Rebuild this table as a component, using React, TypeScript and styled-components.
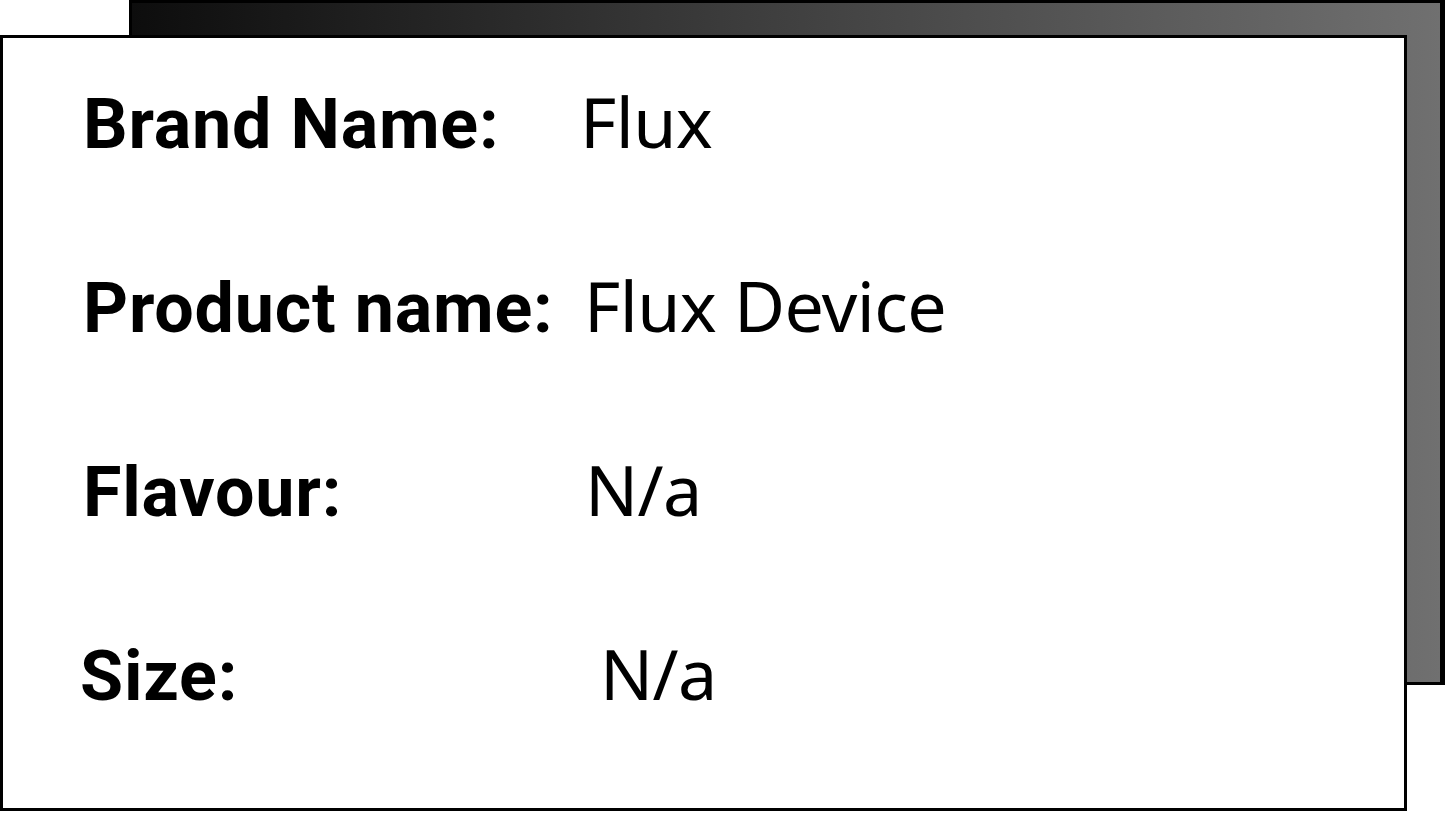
import React from "react";
import styled, { createGlobalStyle } from "styled-components";

const Global = createGlobalStyle`
  html, body { margin: 0; padding: 0; background: #ffffff; }
  body { font-family: "Noto Sans", "Open Sans", sans-serif; }
`;

const Stage = styled.div`
  display: grid;
  width: 1445px;
  height: 813px;
  overflow: hidden;
`;

const BackPanel = styled.div`
  grid-area: 1 / 1;
  margin-left: 129px;
  width: 1316px;
  height: 685px;
  box-sizing: border-box;
  border: 3px solid #000;
  border-right-width: 5px;
  background: linear-gradient(90deg, #0d0d0d 0%, #3b3b3b 45%, #707070 100%);
`;

const Card = styled.div`
  grid-area: 1 / 1;
  position: relative;
  z-index: 1;
  margin-top: 35px;
  width: 1407px;
  height: 776px;
  box-sizing: border-box;
  border: 3px solid #000;
  background: #fff;
  padding: 48px 0 0 80px;
  display: flex;
  flex-direction: column;
  gap: 114px;
`;

const Row = styled.div`
  display: grid;
  grid-template-columns: 499px 1fr;
  align-items: baseline;
  height: 70px;
  line-height: 1;
  font-size: 70px;
  color: #000;
`;

const Label = styled.span<{ $shift?: number }>`
  font-family: Roboto, "Noto Sans", sans-serif;
  font-weight: 700;
  letter-spacing: 0.8px;
  white-space: nowrap;
  margin-left: ${(p) => p.$shift ?? 0}px;
`;

const Value = styled.span<{ $shift?: number }>`
  font-weight: 400;
  letter-spacing: -0.6px;
  white-space: nowrap;
  margin-left: ${(p) => p.$shift ?? 0}px;
`;

const rows = [
  { label: "Brand Name:", value: "Flux", shift: -2, lshift: 0 },
  { label: "Product name:", value: "Flux Device", shift: 2, lshift: 0 },
  { label: "Flavour:", value: "N/a", shift: 3, lshift: 0 },
  { label: "Size:", value: "N/a", shift: 18, lshift: -3 },
];

export default function App() {
  return (
    <>
      <Global />
      <Stage>
        <BackPanel />
        <Card>
          {rows.map((r) => (
            <Row key={r.label}>
              <Label $shift={r.lshift}>{r.label}</Label>
              <Value $shift={r.shift}>{r.value}</Value>
            </Row>
          ))}
        </Card>
      </Stage>
    </>
  );
}
